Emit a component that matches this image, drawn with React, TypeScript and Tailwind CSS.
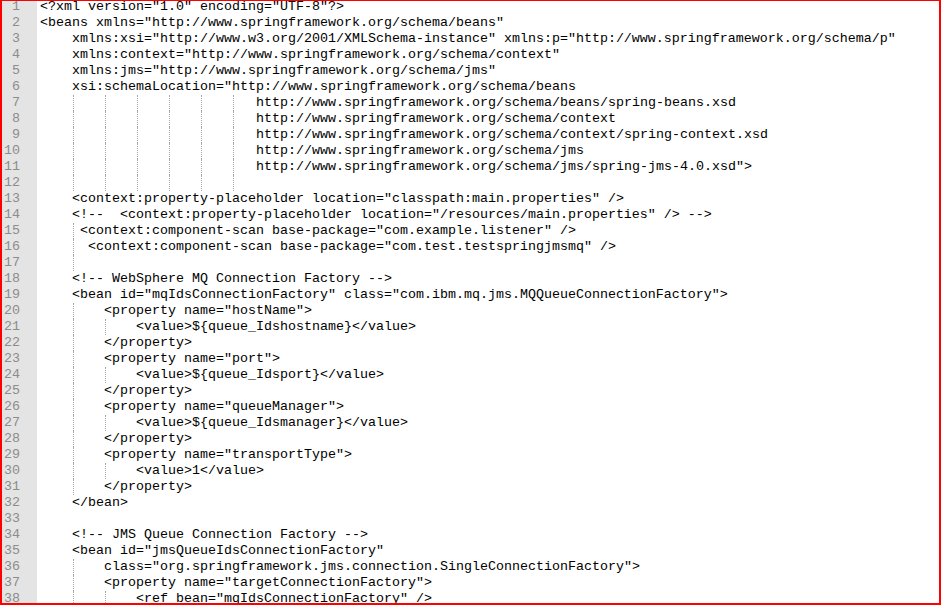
const LINES: string[] = [
  '<?xml version="1.0" encoding="UTF-8"?>',
  '<beans xmlns="http://www.springframework.org/schema/beans"',
  '    xmlns:xsi="http://www.w3.org/2001/XMLSchema-instance" xmlns:p="http://www.springframework.org/schema/p"',
  '    xmlns:context="http://www.springframework.org/schema/context"',
  '    xmlns:jms="http://www.springframework.org/schema/jms"',
  '    xsi:schemaLocation="http://www.springframework.org/schema/beans',
  '                           http://www.springframework.org/schema/beans/spring-beans.xsd',
  '                           http://www.springframework.org/schema/context',
  '                           http://www.springframework.org/schema/context/spring-context.xsd',
  '                           http://www.springframework.org/schema/jms',
  '                           http://www.springframework.org/schema/jms/spring-jms-4.0.xsd">',
  "",
  '    <context:property-placeholder location="classpath:main.properties" />',
  '    <!--  <context:property-placeholder location="/resources/main.properties" /> -->',
  '     <context:component-scan base-package="com.example.listener" />',
  '      <context:component-scan base-package="com.test.testspringjmsmq" />',
  "",
  "    <!-- WebSphere MQ Connection Factory -->",
  '    <bean id="mqIdsConnectionFactory" class="com.ibm.mq.jms.MQQueueConnectionFactory">',
  '        <property name="hostName">',
  "            <value>${queue_Idshostname}</value>",
  "        </property>",
  '        <property name="port">',
  "            <value>${queue_Idsport}</value>",
  "        </property>",
  '        <property name="queueManager">',
  "            <value>${queue_Idsmanager}</value>",
  "        </property>",
  '        <property name="transportType">',
  "            <value>1</value>",
  "        </property>",
  "    </bean>",
  "",
  "    <!-- JMS Queue Connection Factory -->",
  '    <bean id="jmsQueueIdsConnectionFactory"',
  '        class="org.springframework.jms.connection.SingleConnectionFactory">',
  '        <property name="targetConnectionFactory">',
  '            <ref bean="mqIdsConnectionFactory" />',
];

const WIDTHS: Record<number, string> = {
  1: "w-[8px]",
  2: "w-[16px]",
  3: "w-[24px]",
  4: "w-[32px]",
};

const leading = (s: string) => s.length - s.trimStart().length;

// blank lines take the deeper indent of their neighbours (scintilla look-both)
const indents = LINES.map((line, i) => {
  if (line.trim() !== "") return leading(line);
  let prev = 0;
  for (let j = i - 1; j >= 0; j--) {
    if (LINES[j].trim() !== "") {
      prev = leading(LINES[j]);
      break;
    }
  }
  let next = 0;
  for (let j = i + 1; j < LINES.length; j++) {
    if (LINES[j].trim() !== "") {
      next = leading(LINES[j]);
      break;
    }
  }
  return Math.max(prev, next);
});

function Indent({ n }: { n: number }) {
  const segs: { w: number; guide: boolean }[] = [];
  for (let c = 0; c < n; c += 4) {
    segs.push({ w: Math.min(4, n - c), guide: c > 0 });
  }
  return (
    <>
      {segs.map((s, i) => (
        <div key={i} className={`${WIDTHS[s.w]} h-[16px] shrink-0`}>
          {s.guide && (
            <div className="ml-[1px] h-full border-l border-dotted border-[#a9a9a9]" />
          )}
        </div>
      ))}
    </>
  );
}

export default function App() {
  return (
    <div className="w-[941px] h-[605px] overflow-hidden bg-white border-[#ff0000] border-l-2 border-t border-r-2 border-b-2 font-['Liberation_Mono','Courier_New',monospace] text-[13.333px] leading-[16px] text-black">
      <div className="-mt-[2px]">
        {LINES.map((line, i) => (
          <div key={i} className="flex h-[16px]">
            <div className="w-[35px] shrink-0 bg-[#e4e4e4] text-right pr-[17px] text-[#8c8c8c]">
              {i + 1}
            </div>
            <div className="flex pl-[3px] min-w-0">
              <Indent n={indents[i]} />
              <span className="whitespace-pre">{line.trimStart()}</span>
            </div>
          </div>
        ))}
      </div>
    </div>
  );
}
